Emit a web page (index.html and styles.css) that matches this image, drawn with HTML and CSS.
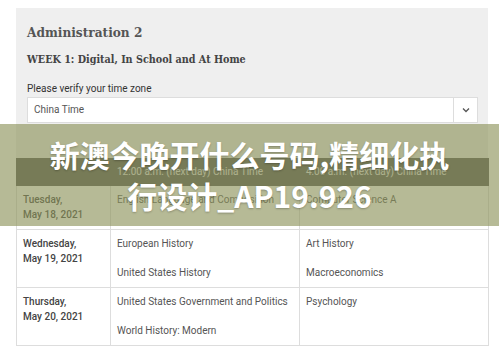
FILE: index.html
```html
<!DOCTYPE html>
<html>
<head>
<meta charset="utf-8">
<link rel="stylesheet" href="styles.css">
</head>
<body>
<div class="panel">
  <div class="head">
    <h1 class="title">Administration 2</h1>
    <h2 class="week">WEEK 1: Digital, In School and At Home</h2>
    <div class="label">Please verify your time zone</div>
    <div class="select">
      <span class="select-value">China Time</span>
      <span class="select-arrow">
        <svg width="8" height="6" viewBox="0 0 8 6"><path d="M1 1.5 L4 4.5 L7 1.5" fill="none" stroke="#555" stroke-width="1.3"/></svg>
      </span>
    </div>
  </div>
  <table class="sched">
    <colgroup><col class="c1"><col class="c2"><col class="c3"></colgroup>
    <thead>
      <tr><th></th><th>12:00 a.m. (next day) China Time</th><th>4:00 a.m. (next day) China Time</th></tr>
    </thead>
    <tbody>
      <tr>
        <td class="date">Tuesday,<br>May 18, 2021</td>
        <td><p>English Language and Composition</p></td>
        <td><p>Computer Science A</p></td>
      </tr>
      <tr>
        <td class="date">Wednesday,<br>May 19, 2021</td>
        <td><p>European History</p><p>United States History</p></td>
        <td><p>Art History</p><p>Macroeconomics</p></td>
      </tr>
      <tr>
        <td class="date">Thursday,<br>May 20, 2021</td>
        <td><p>United States Government and Politics</p><p>World History: Modern</p></td>
        <td><p>Psychology</p></td>
      </tr>
    </tbody>
  </table>
</div>
<div class="banner">
  <div class="banner-text">新澳今晚开什么号码,精细化执<br>行设计_AP19.926</div>
</div>
</body>
</html>
```
FILE: styles.css
```css
html, body {
  margin: 0;
  padding: 0;
  background: #fff;
}
body {
  font-family: Roboto, "Liberation Sans", sans-serif;
  position: relative;
  width: 499px;
  height: 350px;
  overflow: hidden;
}
.panel {
  margin: 8px 0 0 16px;
  width: 472px;
  background: #efefef;
}
.head {
  padding: 14px 10px 35px 11px;
}
.title {
  margin: 0;
  font-family: "DejaVu Serif", "Liberation Serif", serif;
  font-stretch: condensed;
  font-size: 13.5px;
  line-height: 20px;
  font-weight: bold;
  color: #555;
}
.week {
  margin: 10px 0 0;
  font-family: "DejaVu Serif", "Liberation Serif", serif;
  font-stretch: condensed;
  font-size: 10.7px;
  line-height: 16px;
  font-weight: bold;
  color: #444;
}
.label {
  margin-top: 14px;
  font-size: 10px;
  line-height: 14px;
  color: #333;
}
.select {
  margin-top: 1px;
  height: 24px;
  background: #fff;
  border: 1px solid #ddd;
  display: flex;
  align-items: stretch;
}
.select-value {
  flex: 1;
  padding-left: 6px;
  font-size: 10px;
  line-height: 24px;
  color: #555;
}
.select-arrow {
  width: 23px;
  border-left: 1px solid #ddd;
  display: flex;
  align-items: center;
  justify-content: center;
}
.sched {
  width: 472px;
  border-collapse: collapse;
  table-layout: fixed;
  background: #fff;
  font-size: 10px;
}
.c1 { width: 94px; }
.c2 { width: 189px; }
.c3 { width: 189px; }
.sched th {
  background: #565656;
  color: #e6e6e6;
  font-weight: normal;
  text-align: left;
  height: 26px;
  padding: 0 6px;
  border: 1px solid #565656;
  line-height: 14px;
}
.sched td {
  border: 1px solid #ddd;
  vertical-align: top;
  padding: 6px 6px 7px;
  color: #555;
  line-height: 15px;
}
.sched td.date {
  color: #444;
  font-weight: 500;
}
.sched p {
  margin: 0;
}
.sched p + p {
  margin-top: 14px;
}
.banner {
  position: absolute;
  left: 0;
  top: 124px;
  width: 499px;
  height: 102px;
  background: rgba(140, 146, 88, 0.63);
  display: flex;
  align-items: center;
  justify-content: center;
}
.banner-text {
  font-family: "Noto Sans CJK SC", "Noto Sans", sans-serif;
  font-weight: bold;
  font-size: 30px;
  line-height: 41px;
  color: #fff;
  text-align: center;
  text-shadow: 0 1px 2px rgba(0, 0, 0, 0.25);
}
```
